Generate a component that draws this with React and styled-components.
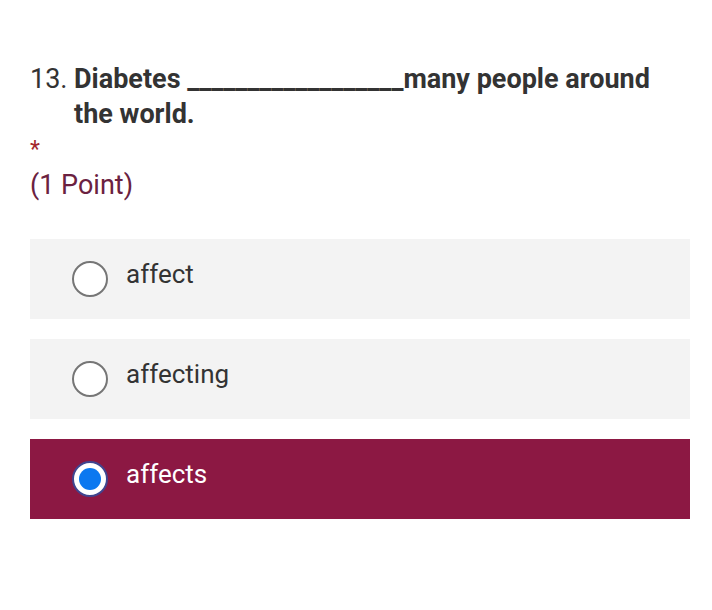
import React from "react";
import styled, { createGlobalStyle } from "styled-components";

const GlobalStyle = createGlobalStyle`
  body {
    margin: 0;
    background: #ffffff;
    font-family: Roboto, "Liberation Sans", sans-serif;
  }
`;

const Page = styled.div`
  width: 712px;
  height: 610px;
  box-sizing: border-box;
  padding: 62px 22px 0 30px;
`;

const QuestionRow = styled.div`
  display: flex;
  font-size: 27px;
  line-height: 35px;
  color: #333333;
`;

const Number = styled.span`
  flex: 0 0 44px;
  font-weight: 400;
`;

const Title = styled.span`
  max-width: 590px;
  font-weight: 700;
`;

const Asterisk = styled.div`
  margin-top: 5px;
  font-size: 23px;
  line-height: 26px;
  color: #a3262e;
`;

const Points = styled.div`
  margin-top: 6px;
  font-size: 27px;
  line-height: 32px;
  color: #6b2140;
`;

const Options = styled.div`
  margin-top: 38px;
  display: flex;
  flex-direction: column;
  gap: 20px;
  width: 660px;
`;

const Option = styled.label`
  display: flex;
  align-items: center;
  gap: 18px;
  height: 80px;
  padding-left: 42px;
  box-sizing: border-box;
  background: ${(p) => (p.$selected ? "#8c1843" : "#f3f3f3")};
  color: ${(p) => (p.$selected ? "#ffffff" : "#333333")};
  font-size: 26px;
`;

const Radio = styled.span`
  position: relative;
  flex: 0 0 36px;
  width: 36px;
  height: 36px;
  box-sizing: border-box;
  border-radius: 50%;
  background: #ffffff;
  border: 2px solid ${(p) => (p.$selected ? "#40458f" : "#767676")};

  &::after {
    content: "";
    display: ${(p) => (p.$selected ? "block" : "none")};
    position: absolute;
    left: 5px;
    top: 5px;
    width: 22px;
    height: 22px;
    border-radius: 50%;
    background: #0b78f0;
  }
`;

const OptionText = styled.span`
  line-height: 30px;
  margin-top: -10px;
`;

const options = [
  { label: "affect", selected: false },
  { label: "affecting", selected: false },
  { label: "affects", selected: true },
];

const App = () => {
  return (
    <React.Fragment>
      <GlobalStyle />
      <Page>
        <QuestionRow>
          <Number>13.</Number>
          <Title>Diabetes __________________many people around the world.</Title>
        </QuestionRow>
        <Asterisk>*</Asterisk>
        <Points>(1 Point)</Points>
        <Options>
          {options.map((o) => (
            <Option key={o.label} $selected={o.selected}>
              <Radio $selected={o.selected} />
              <OptionText>{o.label}</OptionText>
            </Option>
          ))}
        </Options>
      </Page>
    </React.Fragment>
  );
};

export default App;
